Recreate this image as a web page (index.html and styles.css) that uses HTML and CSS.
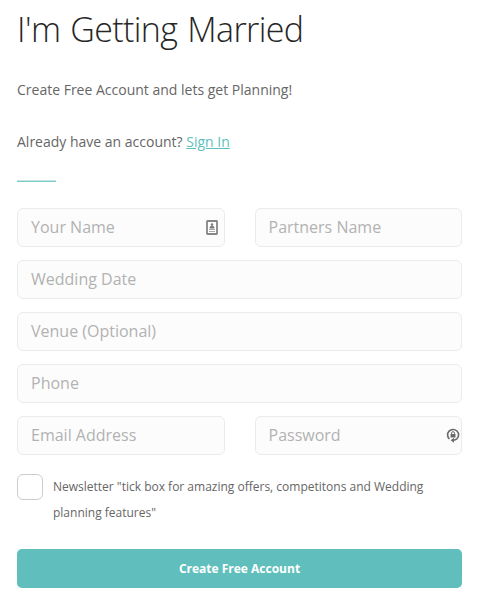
FILE: index.html
```html
<!DOCTYPE html>
<html lang="en">
<head>
    <meta charset="UTF-8">
    <meta name="viewport" content="width=device-width, initial-scale=1.0">
    <title>I'm Getting Married</title>
    <link rel="stylesheet" href="styles.css">
</head>
<body>
    <div class="container">
        <h1>I'm Getting Married</h1>
        <p>Create Free Account and lets get Planning!</p>
        <p>Already have an account? <a href="#">Sign In</a></p>
        <div class="divider"></div>

        <form>
            <div class="field half">
                <input type="text" placeholder="Your Name">
                <svg class="icon-card" width="12" height="15" viewBox="0 0 12 15">
                    <rect x="1" y="1" width="10" height="13" rx="0.5" fill="#fff" stroke="#868686" stroke-width="1.8"/>
                    <circle cx="6" cy="4.5" r="1.2" fill="#7d7d7d"/>
                    <path d="M3.5 8.4c0-3.8 5-3.8 5 0z" fill="#7d7d7d"/>
                    <path d="M3 9.5h6M3 11.5h6" stroke="#aaa" stroke-width="1"/>
                </svg>
            </div>
            <div class="field half">
                <input type="text" placeholder="Partners Name">
            </div>
            <div class="field"><input type="text" placeholder="Wedding Date"></div>
            <div class="field"><input type="text" placeholder="Venue (Optional)"></div>
            <div class="field"><input type="text" placeholder="Phone"></div>
            <div class="field half">
                <input type="email" placeholder="Email Address">
            </div>
            <div class="field half">
                <input type="password" placeholder="Password">
                <svg class="icon-lock" width="14" height="15" viewBox="0 0 14 15">
                    <path d="M3.4 11A5.5 5.5 0 1 1 11 10.8Q9.6 12.2 7 12.2" fill="none" stroke="#6a6a6a" stroke-width="1.6"/>
                    <path d="M8 9.8v5L4.6 12.3z" fill="#6a6a6a"/>
                    <rect x="4.5" y="6" width="5" height="3.5" fill="#6a6a6a"/>
                    <path d="M5.5 6.2V5.2a1.5 1.5 0 0 1 3 0v1" fill="none" stroke="#6a6a6a" stroke-width="1"/>
                </svg>
            </div>

            <label class="newsletter">
                <input type="checkbox">
                <span>Newsletter "tick box for amazing offers, competitons and Wedding planning features"</span>
            </label>

            <button type="button">Create Free Account</button>
        </form>
    </div>
</body>
</html>
```
FILE: styles.css
```css
* {
    box-sizing: border-box;
}
body {
    margin: 0;
    font-family: "Open Sans", sans-serif;
    font-size: 14px;
    line-height: 26px;
    color: #666;
    background-color: #fff;
}
.container {
    padding: 6px 19px 0 17px;
}
h1 {
    margin: 0 0 25px;
    font-size: 34px;
    font-weight: 300;
    line-height: 46px;
    letter-spacing: -0.6px;
    word-spacing: 1.6px;
    color: #262626;
}
p {
    margin: 0 0 26px;
}
a {
    color: #60bfbd;
}
.divider {
    width: 39px;
    height: 2px;
    margin-top: -1px;
    margin-bottom: 26px;
    border-top: 1px solid #c4e7e6;
    background-color: #7ccac8;
}
form {
    display: grid;
    grid-template-columns: 1fr 1fr;
    gap: 13px 30px;
}
.field {
    position: relative;
    grid-column: span 2;
    height: 39px;
}
.field.half {
    grid-column: span 1;
}
.field input {
    display: block;
    width: 100%;
    height: 39px;
    padding: 0 13px 2px;
    border: 1px solid #ebebeb;
    border-radius: 6px;
    background-color: #fcfcfc;
    font-family: inherit;
    font-size: 16px;
}
.field input::placeholder {
    color: #b2b2b2;
}
.icon-card {
    position: absolute;
    top: 12px;
    right: 7px;
}
.icon-lock {
    position: absolute;
    top: 12px;
    right: 2px;
}
.newsletter {
    grid-column: span 2;
    display: flex;
    gap: 10px;
    margin-top: 6px;
    font-size: 12px;
}
.newsletter input {
    appearance: none;
    flex: none;
    width: 26px;
    height: 26px;
    margin: 0;
    border: 1px solid #ccc;
    border-radius: 6px;
    background-color: #fff;
}
button {
    grid-column: span 2;
    height: 39px;
    margin-top: 10px;
    border: none;
    border-radius: 5px;
    background-color: #60bfbd;
    color: #fff;
    font-family: inherit;
    font-size: 12px;
    font-weight: 700;
    cursor: pointer;
}
```
